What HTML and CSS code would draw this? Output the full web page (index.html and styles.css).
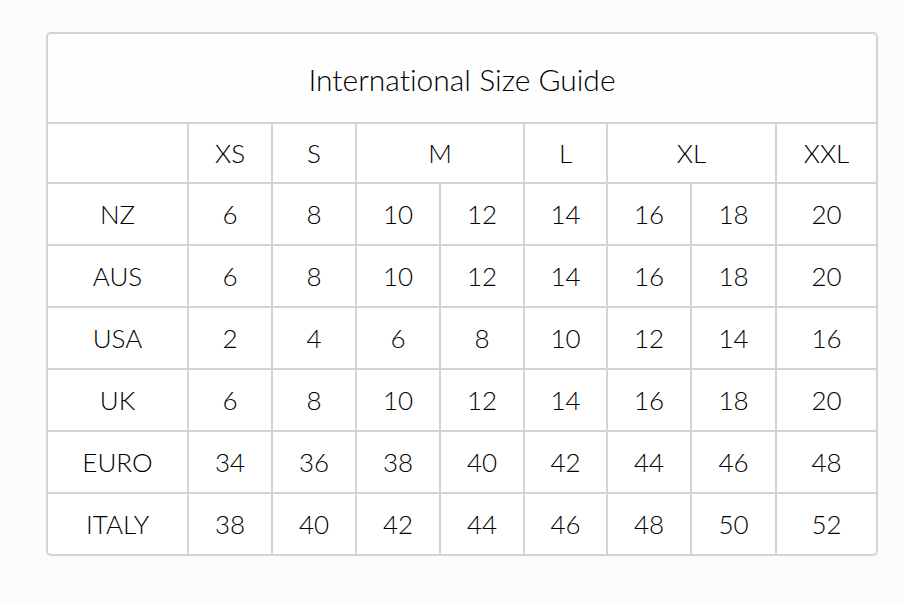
FILE: index.html
```html
<!DOCTYPE html>
<html>
<head>
<meta charset="utf-8">
<link rel="stylesheet" href="styles.css">
</head>
<body>
<div class="frame">
  <div class="guide">
    <div class="cell title">International Size Guide</div>

    <div class="cell"></div>
    <div class="cell">XS</div>
    <div class="cell">S</div>
    <div class="cell span2">M</div>
    <div class="cell">L</div>
    <div class="cell span2">XL</div>
    <div class="cell">XXL</div>

    <div class="cell">NZ</div><div class="cell">6</div><div class="cell">8</div><div class="cell">10</div><div class="cell">12</div><div class="cell">14</div><div class="cell">16</div><div class="cell">18</div><div class="cell">20</div>
    <div class="cell">AUS</div><div class="cell">6</div><div class="cell">8</div><div class="cell">10</div><div class="cell">12</div><div class="cell">14</div><div class="cell">16</div><div class="cell">18</div><div class="cell">20</div>
    <div class="cell">USA</div><div class="cell">2</div><div class="cell">4</div><div class="cell">6</div><div class="cell">8</div><div class="cell">10</div><div class="cell">12</div><div class="cell">14</div><div class="cell">16</div>
    <div class="cell">UK</div><div class="cell">6</div><div class="cell">8</div><div class="cell">10</div><div class="cell">12</div><div class="cell">14</div><div class="cell">16</div><div class="cell">18</div><div class="cell">20</div>
    <div class="cell">EURO</div><div class="cell">34</div><div class="cell">36</div><div class="cell">38</div><div class="cell">40</div><div class="cell">42</div><div class="cell">44</div><div class="cell">46</div><div class="cell">48</div>
    <div class="cell">ITALY</div><div class="cell">38</div><div class="cell">40</div><div class="cell">42</div><div class="cell">44</div><div class="cell">46</div><div class="cell">48</div><div class="cell">50</div><div class="cell">52</div>
  </div>
</div>
</body>
</html>
```

FILE: styles.css
```css
html, body {
  margin: 0;
  padding: 0;
  background: #fbfbfb;
}
body {
  padding: 32px 0 0 46px;
  font-family: Lato, "Open Sans", sans-serif;
  font-weight: 300;
  font-variant-ligatures: none;
  color: #000;
}
.frame {
  width: 828px;
  border: 2px solid #d4d4d4;
  border-radius: 5px;
  overflow: hidden;
  background: #d4d4d4;
}
.guide {
  display: grid;
  grid-template-columns: 139px 82px 82px 82px 82px 81px 82px 83px 99px;
  grid-template-rows: 88px 58px repeat(6, 60px);
  gap: 2px;
}
.cell {
  background: #fff;
  display: flex;
  align-items: center;
  justify-content: center;
  font-size: 26px;
  line-height: 1;
}
.title {
  grid-column: 1 / -1;
  background: #fefefe;
  font-size: 30px;
  padding-top: 2px;
}
.span2 {
  grid-column: span 2;
}
```
